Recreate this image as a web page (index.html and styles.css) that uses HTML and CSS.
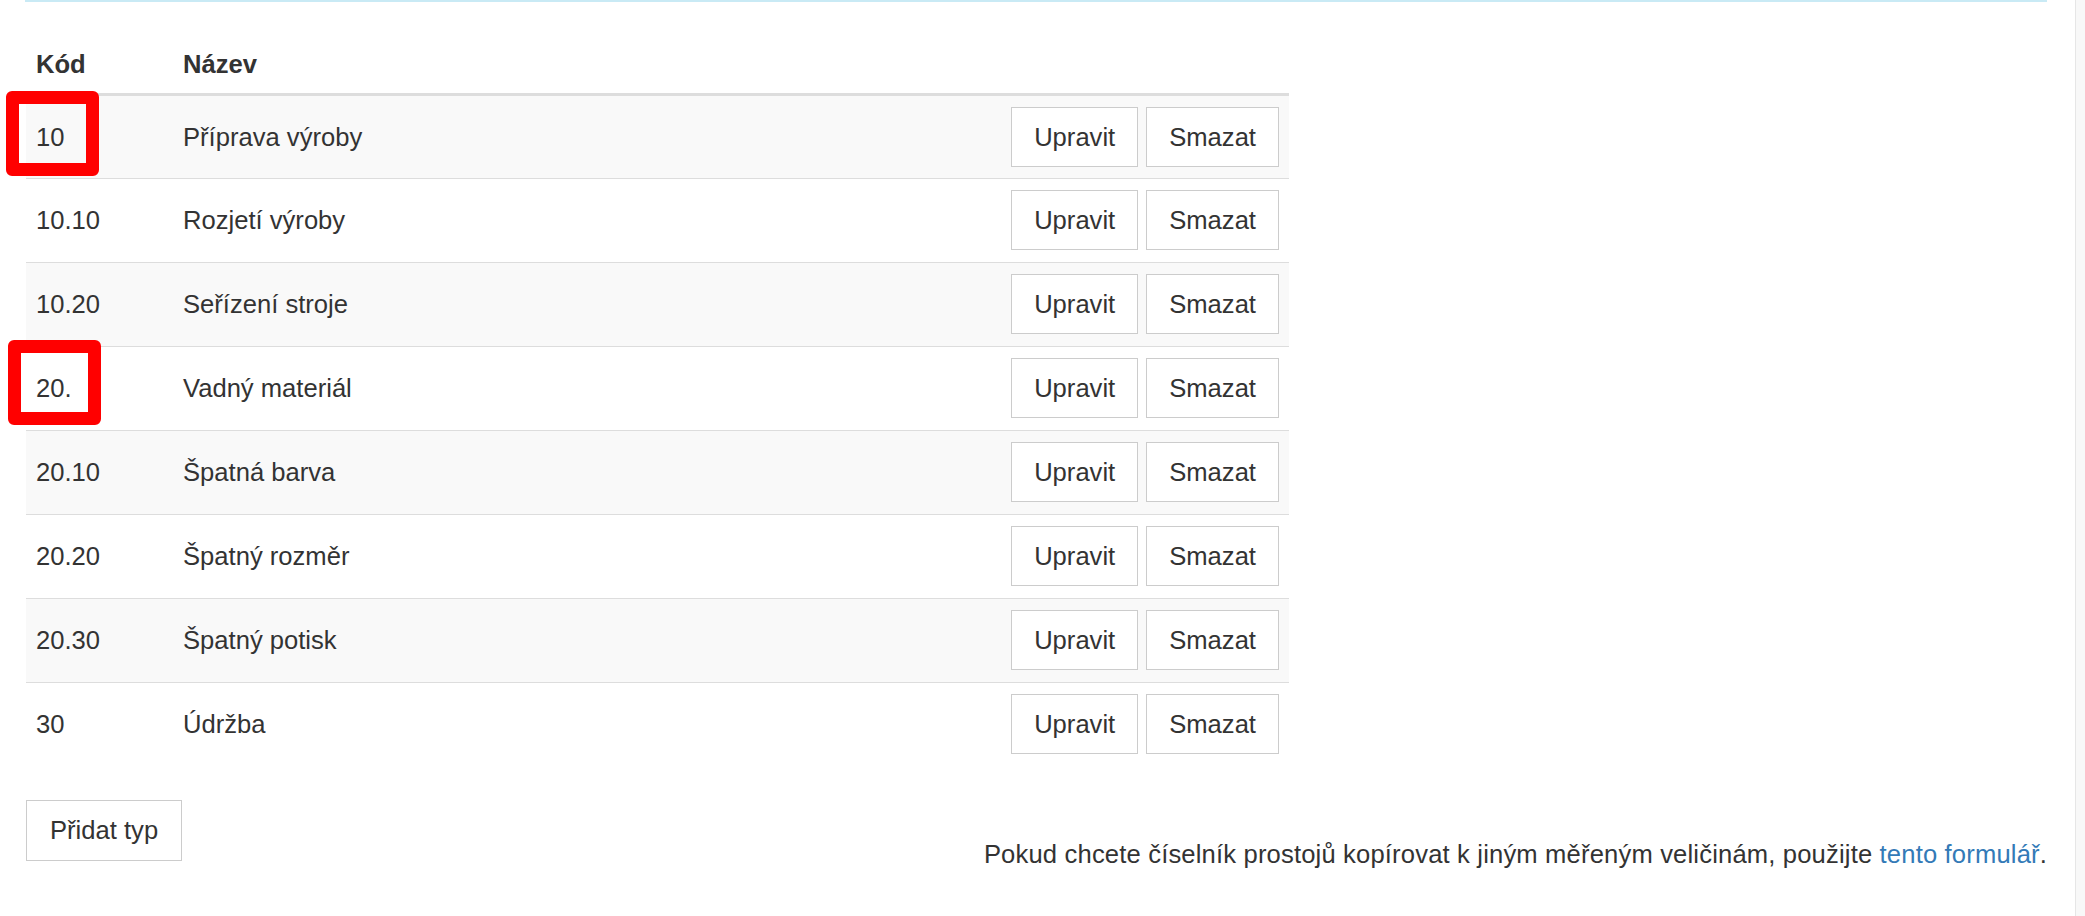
FILE: index.html
```html
<!DOCTYPE html>
<html lang="cs">
<head>
<meta charset="utf-8">
<title>Typy prostojů</title>
<link rel="stylesheet" href="styles.css">
</head>
<body>
<main class="page">
  <div class="panel-edge"></div>
  <table class="codes">
    <colgroup><col class="c-code"><col class="c-name"><col class="c-actions"></colgroup>
    <thead>
      <tr><th>Kód</th><th>Název</th><th></th></tr>
    </thead>
    <tbody>
      <tr><td class="marked">10<span class="mark"></span></td><td>Příprava výroby</td><td class="actions"><div class="btns"><button class="btn">Upravit</button><button class="btn">Smazat</button></div></td></tr>
      <tr><td>10.10</td><td>Rozjetí výroby</td><td class="actions"><div class="btns"><button class="btn">Upravit</button><button class="btn">Smazat</button></div></td></tr>
      <tr><td>10.20</td><td>Seřízení stroje</td><td class="actions"><div class="btns"><button class="btn">Upravit</button><button class="btn">Smazat</button></div></td></tr>
      <tr><td class="marked">20.<span class="mark mark-b"></span></td><td>Vadný materiál</td><td class="actions"><div class="btns"><button class="btn">Upravit</button><button class="btn">Smazat</button></div></td></tr>
      <tr><td>20.10</td><td>Špatná barva</td><td class="actions"><div class="btns"><button class="btn">Upravit</button><button class="btn">Smazat</button></div></td></tr>
      <tr><td>20.20</td><td>Špatný rozměr</td><td class="actions"><div class="btns"><button class="btn">Upravit</button><button class="btn">Smazat</button></div></td></tr>
      <tr><td>20.30</td><td>Špatný potisk</td><td class="actions"><div class="btns"><button class="btn">Upravit</button><button class="btn">Smazat</button></div></td></tr>
      <tr><td>30</td><td>Údržba</td><td class="actions"><div class="btns"><button class="btn">Upravit</button><button class="btn">Smazat</button></div></td></tr>
    </tbody>
  </table>
  <div class="footer-row">
    <button class="btn">Přidat typ</button>
    <p class="note">Pokud chcete číselník prostojů kopírovat k jiným měřeným veličinám, použijte <a href="#">tento formulář</a>.</p>
  </div>
</main>
<aside class="side-edge"></aside>
</body>
</html>
```

FILE: styles.css
```css
html, body {
  margin: 0;
  padding: 0;
  height: 100%;
  background: #fff;
}
body {
  display: flex;
  font-family: "Liberation Sans", Arial, sans-serif;
  font-size: 25.6px;
  line-height: 37px;
  color: #333;
  overflow: hidden;
}
.page {
  flex: 1;
  padding: 0 28px 0 26px;
  min-width: 0;
}
.panel-edge {
  height: 2px;
  background: #c9eaf5;
  margin-left: -1px;
}
.codes {
  width: 1263px;
  margin-top: 34px;
  border-collapse: separate;
  border-spacing: 0;
  table-layout: fixed;
}
.c-code {
  width: 147px;
}
.c-actions {
  width: 300px;
}
.codes th {
  text-align: left;
  font-weight: bold;
  padding: 10px;
  border-bottom: 3px solid #ddd;
  vertical-align: bottom;
}
.codes td {
  padding: 11px 10px 12px;
  border-top: 1px solid #ddd;
  vertical-align: middle;
}
.codes tbody tr:first-child td {
  border-top: 0;
  padding-bottom: 11px;
}
.codes tbody tr:nth-child(odd) td {
  background: #f9f9f9;
}
.actions {
  white-space: nowrap;
}
.btns {
  display: flex;
  justify-content: flex-end;
  gap: 8px;
}
.btn {
  font-family: inherit;
  font-size: 25.6px;
  line-height: 36px;
  color: #333;
  background: #fff;
  border: 1px solid #ccc;
  border-radius: 0;
  padding: 11px 22px;
  margin: 0;
  cursor: pointer;
}
.marked {
  position: relative;
}
.mark {
  position: absolute;
  left: -20px;
  top: -5px;
  width: 67px;
  height: 59px;
  border: 13px solid #ff0000;
  border-radius: 6px;
}
.mark-b {
  left: -18px;
  top: -7px;
}
.footer-row {
  display: flex;
  justify-content: space-between;
  align-items: flex-start;
  margin-top: 34px;
}
.footer-row .btn {
  padding: 11px 23px 12px;
}
.note {
  margin: 36px 0 0;
  letter-spacing: 0.16px;
}
.note a {
  color: #337ab7;
  text-decoration: none;
}
.side-edge {
  width: 9px;
  flex: none;
  border-left: 1px solid #e6e6e6;
  background: #f8f8f8;
}
```
